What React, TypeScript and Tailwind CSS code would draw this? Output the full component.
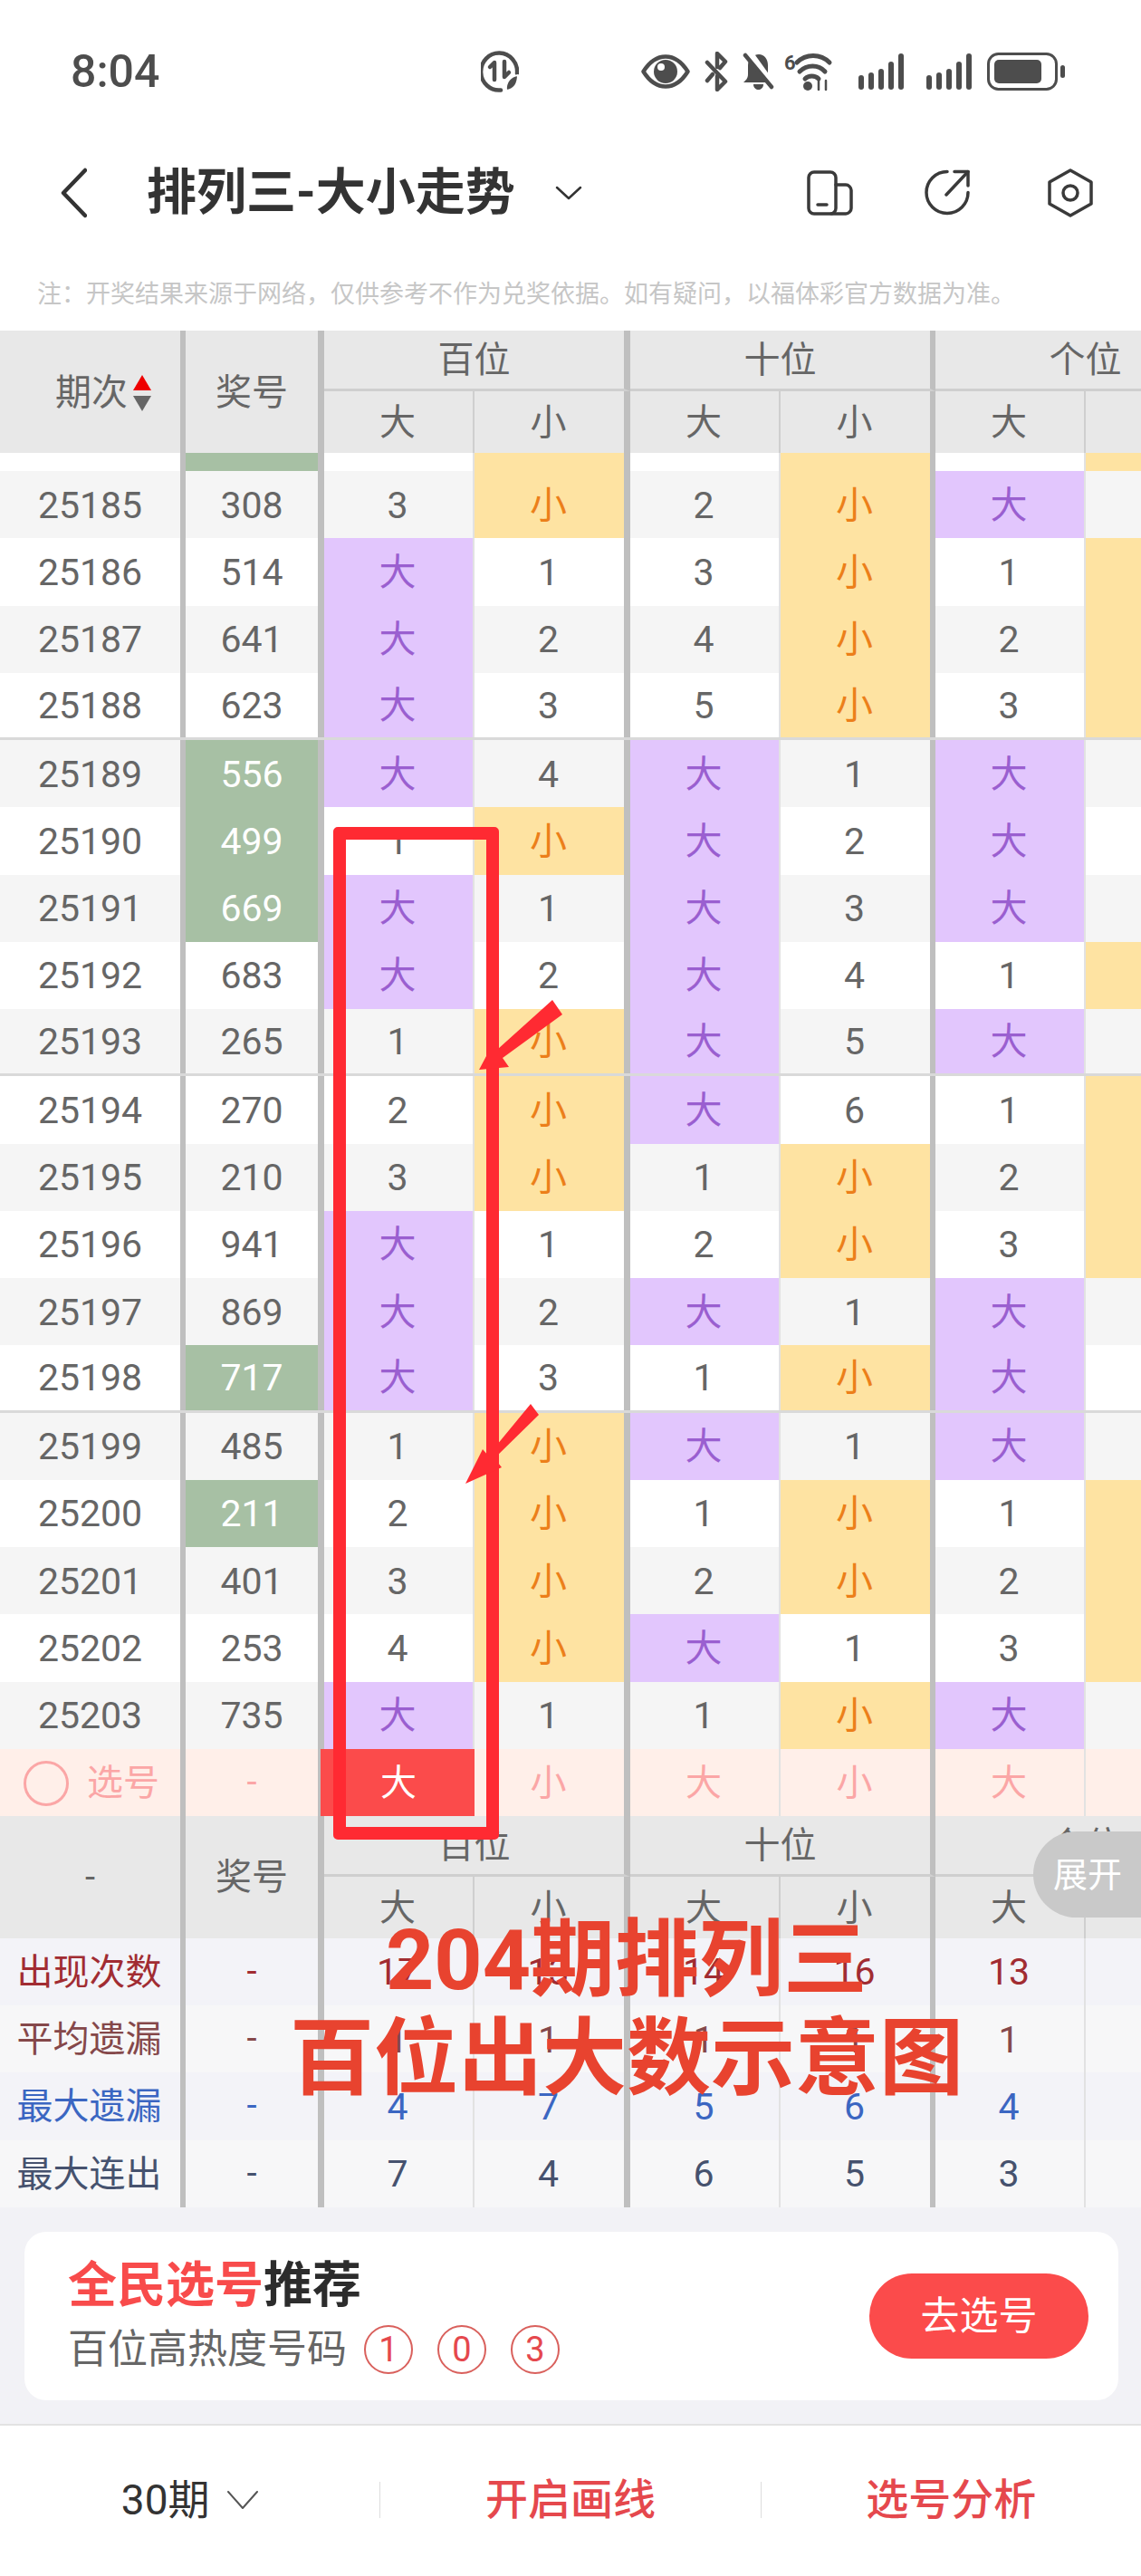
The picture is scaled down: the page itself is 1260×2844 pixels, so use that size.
import React from 'react';

const GRID = 'grid grid-cols-[205px_153px_166px_172px_166px_171px_166px_172px] w-[1371px]';

type Row = { no: number; prize: string; hot?: boolean; cells: (string | number)[]; sep?: boolean };

const rows: Row[] = [
  { no: 25185, prize: '308', cells: [3, '小', 2, '小', '大', ''] },
  { no: 25186, prize: '514', cells: ['大', 1, 3, '小', 1, '小'] },
  { no: 25187, prize: '641', cells: ['大', 2, 4, '小', 2, '小'] },
  { no: 25188, prize: '623', cells: ['大', 3, 5, '小', 3, '小'], sep: true },
  { no: 25189, prize: '556', hot: true, cells: ['大', 4, '大', 1, '大', ''] },
  { no: 25190, prize: '499', hot: true, cells: [1, '小', '大', 2, '大', ''] },
  { no: 25191, prize: '669', hot: true, cells: ['大', 1, '大', 3, '大', ''] },
  { no: 25192, prize: '683', cells: ['大', 2, '大', 4, 1, '小'] },
  { no: 25193, prize: '265', cells: [1, '小', '大', 5, '大', ''], sep: true },
  { no: 25194, prize: '270', cells: [2, '小', '大', 6, 1, '小'] },
  { no: 25195, prize: '210', cells: [3, '小', 1, '小', 2, '小'] },
  { no: 25196, prize: '941', cells: ['大', 1, 2, '小', 3, '小'] },
  { no: 25197, prize: '869', cells: ['大', 2, '大', 1, '大', ''] },
  { no: 25198, prize: '717', hot: true, cells: ['大', 3, 1, '小', '大', ''], sep: true },
  { no: 25199, prize: '485', cells: [1, '小', '大', 1, '大', ''] },
  { no: 25200, prize: '211', hot: true, cells: [2, '小', 1, '小', 1, '小'] },
  { no: 25201, prize: '401', cells: [3, '小', 2, '小', 2, '小'] },
  { no: 25202, prize: '253', cells: [4, '小', '大', 1, 3, '小'] },
  { no: 25203, prize: '735', cells: ['大', 1, 1, '小', '大', ''] },
];

const stats = [
  { label: '出现次数', color: 'text-[#a12c32]', bg: 'bg-[#f3f3f8]', vals: [17, 13, 14, 16, 13, 17] },
  { label: '平均遗漏', color: 'text-[#85484a]', bg: 'bg-[#f7f7f8]', vals: [1, 1, 1, 1, 1, 1] },
  { label: '最大遗漏', color: 'text-[#3b66c2]', bg: 'bg-[#f3f3f8]', vals: [4, 7, 5, 6, 4, 3] },
  { label: '最大连出', color: 'text-[#46526e]', bg: 'bg-[#f7f7f8]', vals: [7, 4, 6, 5, 3, 4] },
];

function divider(i: number) {
  return i % 2 === 0
    ? 'border-r-2 border-[#e2e2e2]'
    : i === 3
      ? 'border-r-[6px] border-[#bfbfbf]'
      : 'border-r-[7px] border-[#bfbfbf]';
}

function Header({ first }: { first: React.ReactNode }) {
  return (
    <div className={`${GRID} grid-rows-[67px_68px] bg-[#e8e8e8] text-[40px] leading-none text-[#666]`}>
      <div className="row-span-2 flex items-center border-r-[6px] border-[#bfbfbf] pt-[2px]">{first}</div>
      <div className="row-span-2 flex items-center justify-center border-r-[7px] border-[#bfbfbf] pt-[2px]">奖号</div>
      {['百位', '十位', '个位'].map((t, i) => (
        <div
          key={t}
          className={`col-span-2 flex items-center justify-center border-b-[3px] border-b-[#cfcfcf] pt-[2px] ${i === 1 ? 'border-r-[6px]' : 'border-r-[7px]'} border-r-[#bfbfbf]`}
        >
          {t}
        </div>
      ))}
      {['大', '小', '大', '小', '大', '小'].map((t, i) => (
        <div
          key={i}
          className={`flex items-center justify-center pr-[2px] pt-[2px] ${i % 2 === 0 ? 'border-r-2 border-[#cfcfcf]' : divider(i)}`}
        >
          {t}
        </div>
      ))}
    </div>
  );
}

function TrendCell({ value, i }: { value: string | number; i: number }) {
  const tone =
    value === '大'
      ? 'bg-[#e2c6fd] text-[#9a5fd0]'
      : value === '小'
        ? 'bg-[#fee3a2] text-[#ec7f1a]'
        : 'text-[#666]';
  return (
    <div className={`flex items-center justify-center pr-[2px] pt-[2px] ${tone} ${divider(i)}`}>
      <span className="text-[41px] leading-none">{value}</span>
    </div>
  );
}

function TrendRow({ row, odd }: { row: Row; odd: boolean }) {
  return (
    <div
      className={`${GRID} h-[74.25px] ${odd ? 'bg-[#f5f5f5]' : 'bg-white'} ${row.sep ? 'border-b-[3px] border-[#d9d9d9]' : ''}`}
    >
      <div className="flex items-center justify-center border-r-[6px] border-[#bfbfbf] pt-[2px] text-[41px] leading-none text-[#666]">
        {row.no}
      </div>
      <div
        className={`flex items-center justify-center border-r-[7px] border-[#bfbfbf] pt-[2px] text-[41px] leading-none ${row.hot ? 'bg-[#a7c0a4] text-white' : 'text-[#666]'}`}
      >
        {row.prize}
      </div>
      {row.cells.map((c, i) => (
        <TrendCell key={i} value={c} i={i} />
      ))}
    </div>
  );
}

function StatusBar() {
  return (
    <div className="flex h-[150px] items-center pl-[78px] pt-[7px] text-[#4d4d4d]">
      <span className="w-[453px] text-[50px] font-medium leading-none">8:04</span>
      <svg width="42" height="46" viewBox="0 0 42 46" fill="none" stroke="#4d4d4d" strokeWidth="4.5" strokeLinecap="round" strokeLinejoin="round">
        <path d="M22 43.5A20 20.5 0 1 1 40 25" />
        <path d="M15 32V13L10 18" />
        <path d="M26 12V29L31 24" />
        <path d="M28 44C27 34 33 28 41 27C41 36 37 43 28 44Z" fill="#4d4d4d" stroke="white" strokeWidth="2" />
      </svg>
      <svg className="ml-[135px]" width="54" height="38" viewBox="0 0 54 38" fill="none">
        <path d="M2.5 19C10 7 18 2.5 27 2.5C36 2.5 44 7 51.5 19C44 31 36 35.5 27 35.5C18 35.5 10 31 2.5 19Z" stroke="#4d4d4d" strokeWidth="4.5" strokeLinejoin="round" />
        <circle cx="27" cy="19" r="13" fill="#4d4d4d" />
        <circle cx="22" cy="14" r="4" fill="white" />
      </svg>
      <svg className="ml-[16px]" width="26" height="44" viewBox="0 0 26 44" fill="none" stroke="#4d4d4d" strokeWidth="4.5" strokeLinecap="round" strokeLinejoin="round">
        <path d="M3 12L23 33L14 42V27" />
        <path d="M14 17V2L23 11L17 18" />
        <path d="M3 32L9 25" />
      </svg>
      <svg className="ml-[15px]" width="37" height="42" viewBox="0 0 37 42" fill="none">
        <path d="M19 2C25 2 29 7 29 14V26L33 33H2C4 31 7 29 7 24V14C7 7 13 2 19 2Z" fill="#4d4d4d" />
        <path d="M13 35H24C24 39 21 41 18.500 41C16 41 13 39 13 35Z" fill="#4d4d4d" />
        <path d="M8 0L36 39" stroke="white" strokeWidth="8" />
        <path d="M4 3L33 38" stroke="#4d4d4d" strokeWidth="4.500" strokeLinecap="round" />
      </svg>
      <svg className="ml-[10px]" width="60" height="42" viewBox="0 0 60 42" fill="none" stroke="#4d4d4d" strokeWidth="5" strokeLinecap="round">
        <text x="0" y="19" fontSize="22" fontWeight="700" fill="#4d4d4d" stroke="none">6</text>
        <path d="M14 11C24 1 40 1 50 11" />
        <path d="M17 21C25 13 38 13 45 21" />
        <path d="M23 29C27 25 34 25 38 29" />
        <circle cx="26" cy="37" r="5" fill="#4d4d4d" stroke="none" />
        <path d="M38 41V31M46 31V41" strokeWidth="2.500" />
      </svg>
      <Signal className="ml-[21px]" />
      <Signal className="ml-[23px]" />
      <svg className="ml-[16px]" width="86" height="42" viewBox="0 0 86 42" fill="none">
        <rect x="1.500" y="1.500" width="75" height="39" rx="11" stroke="#4d4d4d" strokeWidth="3" />
        <rect x="8" y="8" width="52" height="26" rx="5" fill="#4d4d4d" />
        <rect x="81" y="14" width="5" height="14" rx="2.500" fill="#4d4d4d" />
      </svg>
    </div>
  );
}

function Signal({ className }: { className: string }) {
  return (
    <svg className={className} width="52" height="40" viewBox="0 0 52 40" fill="#4d4d4d">
      <rect x="1" y="24" width="6" height="16" rx="3" />
      <rect x="12" y="21" width="6" height="19" rx="3" />
      <rect x="23" y="17" width="6" height="23" rx="3" />
      <rect x="34" y="9" width="6" height="31" rx="3" />
      <rect x="45" y="0" width="6" height="40" rx="3" />
    </svg>
  );
}

function NavBar() {
  return (
    <div className="flex h-[125px] items-center pl-[66px] text-[#333]">
      <svg width="30" height="56" viewBox="0 0 30 56" fill="none" stroke="#333" strokeWidth="4.500" strokeLinecap="round" strokeLinejoin="round">
        <path d="M28 3L4 28L28 53" />
      </svg>
      <h1 className="ml-[66px] w-[451px] text-[55px] font-bold leading-none">排列三-大小走势</h1>
      <svg width="30" height="16" viewBox="0 0 30 16" fill="none" stroke="#333" strokeWidth="2.500" strokeLinecap="round" strokeLinejoin="round">
        <path d="M2 2L15 14L28 2" />
      </svg>
      <svg className="ml-[248px]" width="51" height="50" viewBox="0 0 51 50" fill="none" stroke="#3a3a3a" strokeWidth="3.500" strokeLinecap="round" strokeLinejoin="round">
        <rect x="2" y="2" width="30" height="46" rx="6" />
        <path d="M32 16H43C46 16 49 19 49 22V42C49 45 46 48 43 48H27" />
        <path d="M12 38H22" />
      </svg>
      <svg className="ml-[78px]" width="51" height="51" viewBox="0 0 51 51" fill="none" stroke="#3a3a3a" strokeWidth="3.500" strokeLinecap="round" strokeLinejoin="round">
        <path d="M26 2.500A23 23 0 1 0 49 25.500" />
        <path d="M34 2.500H49V18" />
        <path d="M49 2.500L25 28" />
      </svg>
      <svg className="ml-[86px]" width="50" height="54" viewBox="0 0 50 54" fill="none" stroke="#3a3a3a" strokeWidth="3.500" strokeLinejoin="round">
        <path d="M25 2L48 15V39L25 52L2 39V15Z" />
        <circle cx="25" cy="27" r="8" />
      </svg>
    </div>
  );
}

function Ball({ n }: { n: number }) {
  return (
    <span className="flex h-[54px] w-[54px] items-center justify-center rounded-full border-2 border-[#d9605c] text-[38px] leading-none text-[#e5484d]">
      {n}
    </span>
  );
}

export default function App() {
  return (
    <div className="relative h-[2844px] w-[1260px] overflow-hidden bg-white font-['Roboto','Noto_Sans_CJK_SC',sans-serif]">
      <StatusBar />
      <NavBar />
      <p className="h-[90px] pl-[41px] pt-[37px] text-[27px] leading-none text-[#c6c6c6]">
        注：开奖结果来源于网络，仅供参考不作为兑奖依据。如有疑问，以福体彩官方数据为准。
      </p>

      {/* trend table */}
      <Header
        first={
          <div className="flex items-center pl-[61px]">
            <span>期次</span>
            <svg className="ml-[6px]" width="20" height="40" viewBox="0 0 20 40">
              <path d="M10 0L20 17H0Z" fill="#ee0000" />
              <path d="M0 23H20L10 40Z" fill="#666" />
            </svg>
          </div>
        }
      />
      <div className={`${GRID} h-[20px] bg-white`}>
        <div className="border-r-[6px] border-[#bfbfbf]" />
        <div className="border-r-[7px] border-[#bfbfbf] bg-[#a7c0a4]" />
        {[0, 1, 2, 3, 4, 5].map(i => (
          <div key={i} className={`${i % 2 ? 'bg-[#fee3a2]' : ''} ${divider(i)}`} />
        ))}
      </div>
      {rows.map((r, i) => (
        <TrendRow key={r.no} row={r} odd={i % 2 === 0} />
      ))}

      {/* pick row */}
      <div className={`${GRID} h-[74px] bg-[#ffefe9] text-[40px] leading-none text-[#fba6a6]`}>
        <div className="flex items-center border-r-[6px] border-[#bfbfbf] pl-[26px] pt-[2px]">
          <span className="h-[50px] w-[50px] rounded-full border-[3px] border-[#fba6a6]" />
          <span className="ml-[20px]">选号</span>
        </div>
        <div className="flex items-center justify-center border-r-[7px] border-[#bfbfbf]">-</div>
        {['大', '小', '大', '小', '大', '小'].map((t, i) => (
          <div
            key={i}
            className={`flex items-center justify-center pr-[2px] pt-[2px] ${divider(i)} ${i === 0 ? 'relative -ml-[4px] border-none bg-[#fb4b4b] pl-[4px] text-white' : ''}`}
          >
            {t}
          </div>
        ))}
      </div>

      <Header first={<div className="w-full text-center">-</div>} />

      {stats.map(s => (
        <div key={s.label} className={`${GRID} h-[74.25px] text-[40px] leading-none ${s.bg} ${s.color}`}>
          <div className="flex items-center justify-center border-r-[6px] border-[#bfbfbf] pr-[2px] pt-[2px]">{s.label}</div>
          <div className="flex items-center justify-center border-r-[7px] border-[#bfbfbf]">-</div>
          {s.vals.map((v, i) => (
            <div key={i} className={`flex items-center justify-center pr-[2px] pt-[2px] text-[41px] ${divider(i)}`}>
              {v}
            </div>
          ))}
        </div>
      ))}

      {/* recommend card */}
      <div className="h-[239px] bg-[#f2f2f6] pl-[27px] pr-[25px] pt-[27px]">
        <div className="flex h-[186px] items-center justify-between rounded-[24px] bg-white pl-[48px] pr-[33px]">
          <div className="pt-[3px]">
            <div className="text-[54px] font-bold leading-[60px] text-[#2c2c2c]">
              <span className="text-[#f84b4b]">全民选号</span>推荐
            </div>
            <div className="mt-[12px] flex items-center text-[44px] leading-[56px] text-[#666]">
              <span className="w-[327px]">百位高热度号码</span>
              <div className="flex gap-[27px]">
                <Ball n={1} />
                <Ball n={0} />
                <Ball n={3} />
              </div>
            </div>
          </div>
          <button className="h-[94px] w-[242px] rounded-full bg-[#fb4b4b] pt-[2px] text-[43px] leading-none text-white">
            去选号
          </button>
        </div>
      </div>

      {/* bottom bar */}
      <div className="flex h-[168px] items-center border-t-2 border-[#e2e2e2] bg-white pb-[2px] text-[47px] leading-none">
        <div className="flex h-[40px] flex-1 items-center justify-center border-r border-[#dddddd] text-[46px] text-[#333]">
          30期
          <svg className="ml-[18px]" width="36" height="22" viewBox="0 0 36 22" fill="none" stroke="#555" strokeWidth="2" strokeLinecap="round" strokeLinejoin="round">
            <path d="M2 2L18 20L34 2" />
          </svg>
        </div>
        <div className="flex h-[40px] flex-1 items-center justify-center border-r border-[#dddddd] font-medium text-[#e5484d]">
          开启画线
        </div>
        <div className="flex h-[40px] flex-1 items-center justify-center font-medium text-[#e5484d]">选号分析</div>
      </div>

      {/* hand-drawn markup on top of the screenshot */}
      <div className="absolute left-[368px] top-[913px] h-[1118px] w-[183px] rounded-[5px] border-[14px] border-[#ff2a32]" />
      <svg className="absolute left-[500px] top-[1090px]" width="130" height="560" viewBox="0 0 130 560" fill="#ff2a32">
        <path d="M110 14L121 30L55 78L62 88L29 91L45 61L50 68Z" />
        <path d="M86 460L95 472L46 520L54 530L14 548L33 510L39 517Z" />
      </svg>
      <div className="absolute left-0 top-[2110px] w-[1384px] text-center text-[93px] font-bold leading-[109px] text-[#e8432f]">
        204期排列三
        <br />
        百位出大数示意图
      </div>
      <div className="absolute right-0 top-[2022px] flex h-[95px] w-[119px] items-center rounded-l-full bg-[#c9c9c9] pl-[22px] text-[38px] leading-none text-white">
        展开
      </div>
    </div>
  );
}
